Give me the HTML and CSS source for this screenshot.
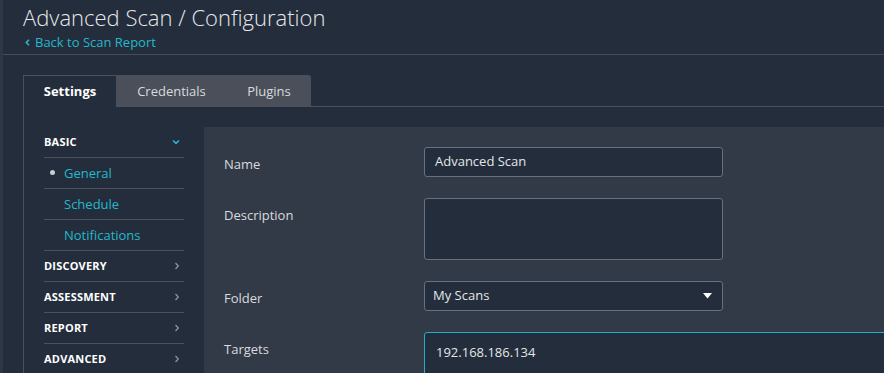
FILE: index.html
```html
<!DOCTYPE html>
<html lang="en">
<head>
<meta charset="utf-8">
<title>Advanced Scan / Configuration</title>
<link rel="stylesheet" href="styles.css">
</head>
<body>
<div class="page">
  <header class="header">
    <h1 class="title">Advanced Scan / Configuration</h1>
    <a class="back" href="#"><svg class="back-icon" width="5" height="7" viewBox="0 0 5 7"><path d="M4 0.8 L1.3 3.5 L4 6.2" fill="none" stroke="#25b8cc" stroke-width="1.6"/></svg>Back to Scan Report</a>
  </header>

  <div class="tabs">
    <div class="tab tab-active">Settings</div>
    <div class="tab tab-cred">Credentials</div>
    <div class="tab tab-plug">Plugins</div>
  </div>

  <div class="tabbody">
    <nav class="sidebar">
      <div class="side-row side-head">BASIC
        <svg class="chev" width="8" height="6" viewBox="0 0 8 6"><path d="M1 1.5 L4 4.3 L7 1.5" fill="none" stroke="#25b8cc" stroke-width="1.6"/></svg>
      </div>
      <div class="side-row side-item current"><span class="dot"></span>General</div>
      <div class="side-row side-item">Schedule</div>
      <div class="side-row side-item">Notifications</div>
      <div class="side-row side-head">DISCOVERY
        <svg class="chev" width="6" height="8" viewBox="0 0 6 8"><path d="M1.5 1 L4.3 4 L1.5 7" fill="none" stroke="#8b93a2" stroke-width="1.3"/></svg>
      </div>
      <div class="side-row side-head">ASSESSMENT
        <svg class="chev" width="6" height="8" viewBox="0 0 6 8"><path d="M1.5 1 L4.3 4 L1.5 7" fill="none" stroke="#8b93a2" stroke-width="1.3"/></svg>
      </div>
      <div class="side-row side-head">REPORT
        <svg class="chev" width="6" height="8" viewBox="0 0 6 8"><path d="M1.5 1 L4.3 4 L1.5 7" fill="none" stroke="#8b93a2" stroke-width="1.3"/></svg>
      </div>
      <div class="side-row side-head last">ADVANCED
        <svg class="chev" width="6" height="8" viewBox="0 0 6 8"><path d="M1.5 1 L4.3 4 L1.5 7" fill="none" stroke="#8b93a2" stroke-width="1.3"/></svg>
      </div>
    </nav>

    <section class="panel">
      <div class="form-row">
        <label class="label">Name</label>
        <div class="field field-input">Advanced Scan</div>
      </div>
      <div class="form-row">
        <label class="label">Description</label>
        <div class="field field-area"></div>
      </div>
      <div class="form-row">
        <label class="label">Folder</label>
        <div class="field field-select">My Scans
          <svg class="caret" width="9" height="6" viewBox="0 0 9 6"><path d="M0 0 H9 L4.5 5.5 Z" fill="#ffffff"/></svg>
        </div>
      </div>
      <div class="form-row">
        <label class="label">Targets</label>
        <div class="field field-targets">192.168.186.134</div>
      </div>
    </section>
  </div>
</div>
</body>
</html>
```

FILE: styles.css
```css
html, body {
  margin: 0;
  padding: 0;
  background: #242d3b;
  height: 100%;
  overflow: hidden;
}

body {
  font-family: "Open Sans", "Noto Sans", "Liberation Sans", sans-serif;
  color: #e3e6e9;
}

.page {
  border-left: 3px solid #2f3745;
  height: 100vh;
  box-sizing: border-box;
  overflow: hidden;
  display: flex;
  flex-direction: column;
}

.header {
  padding: 2px 0 3px 20px;
  border-bottom: 1px solid #464d59;
  flex: none;
}

.title {
  margin: 0;
  font-size: 22px;
  font-weight: 300;
  line-height: 30px;
  color: #e6e8eb;
}

.back {
  display: flex;
  align-items: center;
  margin-top: 1px;
  font-size: 13px;
  line-height: 18px;
  color: #25b8cc;
  text-decoration: none;
}

.back-icon {
  margin: 0 5px 0 2px;
}

.tabs {
  display: flex;
  flex: none;
  margin: 20px 0 0 20px;
  height: 31px;
  position: relative;
  z-index: 1;
}

.tab {
  height: 31px;
  box-sizing: border-box;
  font-size: 13px;
  line-height: 30px;
  padding-top: 1px;
  text-align: center;
  color: #d8dbdf;
  background: #4a4f5a;
}

.tab-active {
  width: 93px;
  background: #242d3b;
  border-top: 1px solid #4a515d;
  border-left: 1px solid #4a515d;
  padding-top: 0;
  font-weight: 700;
  color: #ffffff;
  height: 32px;
}

.tab-cred {
  width: 98px;
  padding-left: 13px;
}

.tab-plug {
  width: 97px;
  padding-left: 13px;
  border-top-right-radius: 3px;
}

.tabbody {
  flex: 1;
  min-height: 0;
  display: flex;
  gap: 20px;
  margin-left: 20px;
  padding: 20px 0 0 20px;
  border-top: 1px solid #4a515d;
  border-left: 1px solid #4a515d;
  overflow: hidden;
}

.sidebar {
  width: 140px;
  flex: none;
}

.side-row {
  height: 30px;
  box-sizing: content-box;
  display: flex;
  align-items: center;
  border-bottom: 1px solid #4a515d;
}

.side-row.last {
  border-bottom: none;
}

.side-head {
  font-size: 11px;
  font-weight: 700;
  color: #ffffff;
  letter-spacing: 0.2px;
  justify-content: space-between;
  padding-right: 4px;
  line-height: 15px;
  height: 29px;
  padding-bottom: 1px;
}

.side-item {
  font-size: 13px;
  color: #25b8cc;
  padding-left: 20px;
  position: relative;
  line-height: 18px;
}

.dot {
  position: absolute;
  left: 6px;
  top: 12px;
  width: 5px;
  height: 5px;
  border-radius: 50%;
  background: #c9ccd1;
}

.panel {
  flex: 1;
  min-width: 0;
  background: #333a47;
  padding: 20px 0 0 20px;
  overflow: hidden;
}

.form-row {
  display: flex;
  margin-bottom: 21px;
}

.label {
  width: 200px;
  flex: none;
  font-size: 13px;
  line-height: 18px;
  padding-top: 8px;
  color: #d8dbdf;
}

.field {
  box-sizing: border-box;
  width: 299px;
  flex: none;
  background: #242d3b;
  border: 1px solid #657083;
  border-radius: 3px;
  font-size: 13px;
  color: #e3e6e9;
}

.field-input {
  height: 30px;
  line-height: 27px;
  padding-left: 10px;
}

.field-area {
  height: 62px;
}

.field-select {
  height: 30px;
  line-height: 27px;
  padding: 0 10px 1px 8px;
  display: flex;
  justify-content: space-between;
  align-items: center;
}

.field-targets {
  width: 480px;
  height: 80px;
  border-color: #1eb1c5;
  padding: 8px 0 0 11px;
  line-height: 22px;
}
```
